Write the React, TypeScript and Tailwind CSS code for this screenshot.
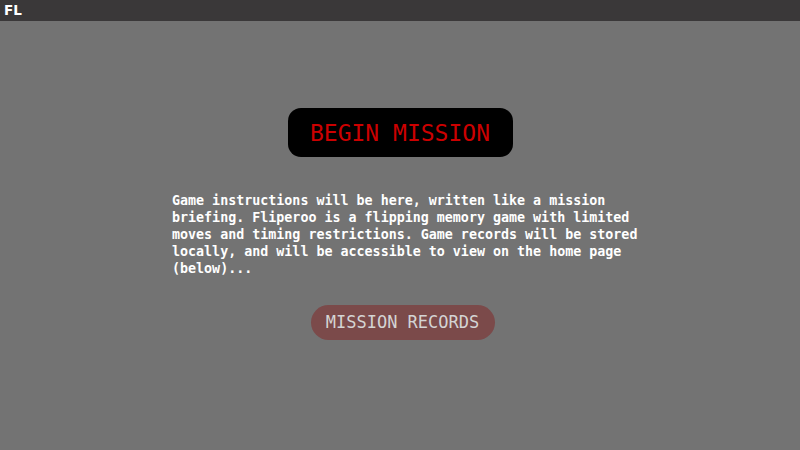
import React from "react";

export default function App() {
  return (
    <div className="w-[800px] h-[450px] flex flex-col bg-[#737373] overflow-hidden">
      <header className="h-[21px] bg-[#3a3839] flex items-center pl-[4px] shrink-0">
        <span className="text-white font-bold text-[13.5px] leading-none" style={{ fontFamily: '"DejaVu Sans", sans-serif' }}>
          FL
        </span>
      </header>
      <main
        className="flex flex-col items-center pt-[87px]"
        style={{ fontFamily: '"DejaVu Sans Mono", monospace' }}
      >
        <button className="w-[225px] h-[49px] rounded-[13px] bg-black flex items-center justify-center text-[#cc0000] text-[23px] leading-none pt-[1px]">
          BEGIN MISSION
        </button>
        <p className="self-start ml-[172px] mt-[35px] w-[480px] text-white font-bold text-[13.33px] leading-[17px]">
          Game instructions will be here, written like a mission briefing. Fliperoo is a flipping memory game with limited moves and timing restrictions. Game records will be stored locally, and will be accessible to view on the home page (below)...
        </p>
        <button className="mt-[28px] ml-[5px] w-[184px] h-[35px] rounded-full bg-[#7b4a4a] flex items-center justify-center text-[#d4d4d4] text-[17px] leading-none">
          MISSION RECORDS
        </button>
      </main>
    </div>
  );
}
